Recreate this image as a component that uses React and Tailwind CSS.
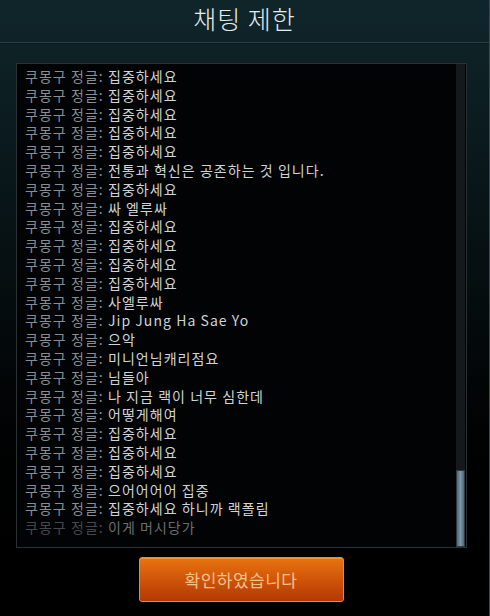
import React from 'react';

const lines = [
  '집중하세요',
  '집중하세요',
  '집중하세요',
  '집중하세요',
  '집중하세요',
  '전통과 혁신은 공존하는 것 입니다.',
  '집중하세요',
  '싸 엘루싸',
  '집중하세요',
  '집중하세요',
  '집중하세요',
  '집중하세요',
  '사엘루싸',
  'Jip Jung Ha Sae Yo',
  '으악',
  '미니언님캐리점요',
  '님들아',
  '나 지금 랙이 너무 심한데',
  '어떻게해여',
  '집중하세요',
  '집중하세요',
  '집중하세요',
  '으어어어어 집중',
  '집중하세요 하니까 랙폴림',
  '이게 머시당가',
];

export default function App() {
  return (
    <div
      className="w-[490px] h-[616px] overflow-hidden flex flex-col bg-gradient-to-b from-[#10262b] via-[#050c0e] to-black border-r border-[#3a4a4e]"
      style={{ fontFamily: '"Noto Sans CJK KR", "Noto Sans", sans-serif' }}
    >
      <div className="h-[43px] flex justify-center pt-[3px] border-b border-[#24414a] shrink-0">
        <h1 className="text-[25px] leading-[30px] font-light tracking-[1px] text-[#e3ecee]">채팅 제한</h1>
      </div>
      <div className="h-[1px] bg-[#0a1a1e] shrink-0" />

      <div className="mt-[19px] ml-[16px] w-[451px] h-[485px] border border-[#2b3033] bg-[#020304] flex shrink-0">
        <div className="flex-1 pl-[8px] pt-[3px] overflow-hidden">
          {lines.map((msg, i) => (
            <div
              key={i}
              className={`h-[18.8px] text-[14px] leading-[18.8px] tracking-[1.05px] whitespace-nowrap ${i === lines.length - 1 ? 'opacity-50' : ''}`}
            >
              <span className="text-[#878d92]">쿠몽구 정글: </span>
              <span className="text-[#cfd3d6]">{msg}</span>
            </div>
          ))}
        </div>
        <div className="w-[9px] mr-[1px] flex flex-col">
          <div className="flex-1 bg-[#15191c]" />
          <div className="h-[77px] bg-gradient-to-r from-[#4f6676] via-[#7c98a8] to-[#4f6676] border border-[#2e3b43]" />
        </div>
      </div>

      <div className="flex justify-center mt-[9px] -ml-[7px]">
        <button className="w-[205px] h-[45px] rounded-[3px] border border-[#f2882e] bg-gradient-to-b from-[#e8740f] via-[#cf550a] to-[#b33805] text-[#f5c18d] text-[17px] tracking-[0.5px] shadow-[inset_0_1px_0_rgba(255,200,120,0.4)]">
          확인하였습니다
        </button>
      </div>
    </div>
  );
}
